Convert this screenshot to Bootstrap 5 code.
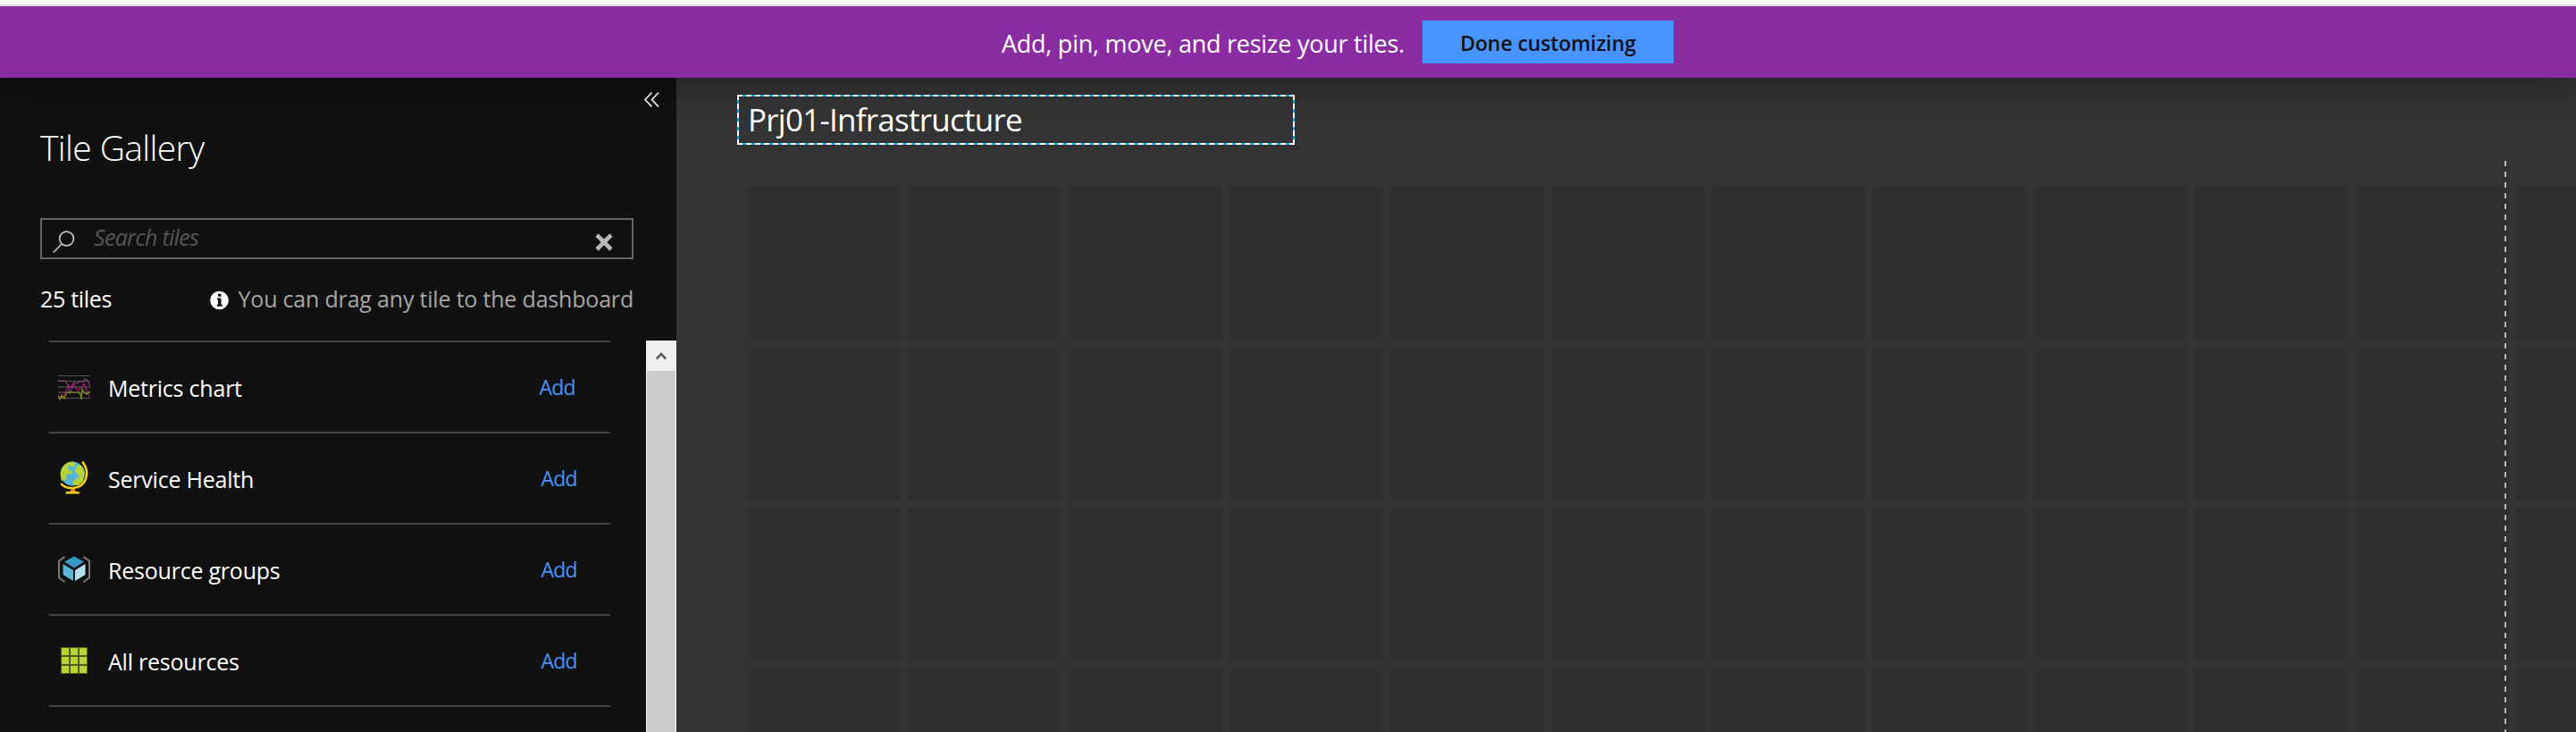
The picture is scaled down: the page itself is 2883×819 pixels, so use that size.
<!DOCTYPE html>
<html lang="en">
<head>
<meta charset="utf-8">
<meta name="viewport" content="width=device-width, initial-scale=1">
<title>Prj01-Infrastructure</title>
<link href="https://cdn.jsdelivr.net/npm/bootstrap@5.3.0/dist/css/bootstrap.min.css" rel="stylesheet">
<style>
  body { height: 100vh; background: #333; color: #fff; font: 400 25px/30px "Open Sans", "Noto Sans", sans-serif; }
  .top-strip { height: 7px; background: #f9f9f9; border-bottom: 2px solid #dedede; z-index: 3; }
  .customize-bar { height: 80px; padding-left: 1121px; background: #8a2da2; box-shadow: 0 0 44px rgba(0,0,0,.43); z-index: 2; }
  .customize-text { width: 471px; font-size: 27px; letter-spacing: -.25px; padding-top: 3px; white-space: nowrap; }
  .btn-done { width: 281px; height: 48px; background: #4894fe; color: #111; font-size: 23px; font-weight: 600; line-height: 30px; letter-spacing: -.1px; padding: 2px 0 0; }
  .btn-done:hover { background: #5ba0ff; color: #111; }
  .gallery { width: 757px; background: #111; }
  .collapse-row { height: 58px; padding: 16px 19px 0 0; }
  .gallery-title { font-size: 39px; font-weight: 300; line-height: 40px; letter-spacing: -.6px; }
  .gallery-head { padding: 0 48px 0 45px; }
  .search-box { height: 46px; margin-top: 59px; border: 2px solid #666; padding: 0 21px 0 12px; }
  .search-box input { background: none; color: #fff; font-size: inherit; font-style: italic; letter-spacing: -.7px; line-height: 30px; padding: 0 0 4px; margin-left: 20px; }
  .search-box input:focus { background: none; color: #fff; }
  .search-box input::placeholder { color: #565656; opacity: 1; }
  .gallery-info { margin-top: 29px; height: 30px; }
  .tile-count { letter-spacing: -.3px; }
  .drag-hint { color: #a6a6a6; letter-spacing: -.19px; }
  .info-icon { margin: 3px 8px 0 0; }
  .tile-scroll { margin-top: 32px; }
  .tile-list { width: 628px; margin-left: 55px; border-top: 2px solid #444; }
  .tile-row { height: 102px; border-bottom: 2px solid #444; padding: 0 37px 0 10px; }
  .tile-row:first-child { padding-right: 39px; }
  .tile-icon { width: 36px; height: 60px; margin-right: 20px; flex: none; }
  .tile-name { letter-spacing: -.22px; padding-top: 2px; }
  .add-link { color: #4894fe; font-size: 23px; letter-spacing: -.7px; text-decoration: none; }
  .scroll-rail { width: 34px; background: #cdcdcd; border: solid #f0f0f0; border-width: 0 1px; }
  .scroll-up { height: 34px; margin: 0 -1px; background: #f0f0f0; }
  .board { padding: 19px 0 0 68px; }
  .board-title { position: relative; width: 624px; height: 56px; border: 2px solid #00b4f1; padding: 9px 0 0 10px; font-size: 35px; line-height: 34px; letter-spacing: -.75px; font-weight: 400; }
  .board-title::after { content: ""; position: absolute; inset: -2px; border: 2px dashed #fff; }
  .board-grid { display: grid; grid-template-columns: repeat(12, 170px); grid-auto-rows: 170px; gap: 10px; margin: 47px 0 0 12px; }
  .board-cell { background: #2f2f2f; }
  .fold-line { position: absolute; left: 2046px; top: 93px; bottom: 0; width: 2px; background: repeating-linear-gradient(#b9b9b9 0 6px, transparent 6px 12px); }
</style>
</head>
<body class="d-flex flex-column overflow-hidden m-0">
<div class="top-strip flex-shrink-0 position-relative"></div>
<header class="customize-bar d-flex align-items-center flex-shrink-0 position-relative">
  <span class="customize-text">Add, pin, move, and resize your tiles.</span>
  <button class="btn btn-done border-0 rounded-0" type="button">Done customizing</button>
</header>
<div class="d-flex flex-grow-1 overflow-hidden">
  <aside class="gallery d-flex flex-column flex-shrink-0">
    <div class="collapse-row d-flex justify-content-end">
      <svg width="18" height="17" viewBox="0 0 18 17" fill="none" stroke="#eee" stroke-width="1.8"><path d="M9.500 .7 2 8.500l7.500 7.800M17 .7 9.500 8.500l7.500 7.800"/></svg>
    </div>
    <div class="gallery-head">
      <h2 class="gallery-title m-0">Tile Gallery</h2>
      <div class="search-box d-flex align-items-center">
        <svg class="mt-2 flex-shrink-0" width="26" height="26" viewBox="0 0 26 26" fill="none" stroke="#c4c4c4" stroke-width="1.7"><circle cx="15.500" cy="9" r="7.900"/><path d="M10 15 .7 24.500"/></svg>
        <input class="form-control border-0 shadow-none" type="text" placeholder="Search tiles" aria-label="Search tiles">
        <svg class="mt-2 flex-shrink-0" width="20" height="20" viewBox="0 0 20 20" stroke="#b9b9b9" stroke-width="4.600"><path d="M2 2 18 18M18 2 2 18"/></svg>
      </div>
      <div class="gallery-info d-flex justify-content-between align-items-center">
        <span class="tile-count">25 tiles</span>
        <span class="drag-hint d-flex align-items-center text-nowrap">
          <svg class="info-icon" width="24" height="22" viewBox="0 0 24 22"><circle cx="10.500" cy="11" r="10.300" fill="#fff"/><path d="M9 3.800h3.500v3H9zM8 8.500h4.500v7.200h1.300v2H7.800v-2H9v-5.200H8z" fill="#111"/></svg>
          You can drag any tile to the dashboard
        </span>
      </div>
    </div>
    <div class="tile-scroll d-flex flex-grow-1 justify-content-between overflow-hidden">
      <div class="tile-list">
        <div class="tile-row d-flex align-items-center">
          <svg class="tile-icon" viewBox="0 0 36 60" fill="none"><path d="M0 17.500h36M0 23.500h36M0 42.500h36" stroke="#555" stroke-width="1"/><path d="M0 30h36M0 36h36" stroke="#3b3b3b" stroke-width="2"/><path d="M0 22l2 1h6l3 5 2 9 2-4 3-8 3 1 4-2h3l2-3 3 2 3 6" stroke="#80477f" stroke-width="1.100"/><path d="M0 40l3 1 3 1 2-6 4-8 2 2 3-4 3 5 3 3 3-4 3-4 2 5 2 6 3 4" stroke="#b4127c" stroke-width="1.200"/><path d="M0 40l2 4 2-5 3 4 3-7h13l2 2 1 6 1-12 2 4 3 2 4-3" stroke="#7fa30b" stroke-width="1.100"/></svg>
          <span class="tile-name">Metrics chart</span><a class="add-link ms-auto" href="#">Add</a>
        </div>
        <div class="tile-row d-flex align-items-center">
          <svg class="tile-icon" viewBox="-.7 0 36 60"><circle cx="15.500" cy="25" r="13.600" fill="#59b4d9"/><path d="M2 25C3 17 8 11.500 16 11.400c2 1 3 3 2 5l-3 1-2-2-3 2 1 3 4 2-1 4-4-2-2 3 1 3-2 2-3-1-1 3zM19 17l4-2 4 3 2 6-2 10-5 4h-5l-1-4 3-3 3-1 1-3-4-3-1-4 3-1z" fill="#b8d432"/><path d="M26.500 11.500c9 12 5 28-10 29.500C10 41.500 5 39 2.500 36" fill="none" stroke="#fcd116" stroke-width="2.600"/><path d="M14 42h4l1 3h-6z" fill="#ff8c00"/><path d="M8 45h15v2.500H8z" fill="#fcd116"/></svg>
          <span class="tile-name">Service Health</span><a class="add-link ms-auto" href="#">Add</a>
        </div>
        <div class="tile-row d-flex align-items-center">
          <svg class="tile-icon" viewBox="0 -2 36 60"><path d="M18 13.500 29 19.500 18 26.500 7 19.500z" fill="#3999c6"/><path d="M5.500 22 17 29v12L5.500 34z" fill="#59b4d9"/><path d="M30.500 22 19 29v12l11.500-7z" fill="#b3def0"/><path d="M7.500 14.200 1 18.500v19l6.500 4.500M28.500 14.200 35 18.500v19L28.500 42" fill="none" stroke="#7a7a7a" stroke-width="2"/></svg>
          <span class="tile-name">Resource groups</span><a class="add-link ms-auto" href="#">Add</a>
        </div>
        <div class="tile-row d-flex align-items-center">
          <svg class="tile-icon" viewBox="0 -2 36 60"><path d="M3 13h30v30H3z" fill="#4c5a1b"/><path d="M4 14h8v8H4zM14 14h8v8h-8zM24 14h8v8h-8zM4 24h8v8H4zM14 24h8v8h-8zM24 24h8v8h-8zM4 34h8v8H4zM14 34h8v8h-8zM24 34h8v8h-8z" fill="#b8d432"/></svg>
          <span class="tile-name">All resources</span><a class="add-link ms-auto" href="#">Add</a>
        </div>
      </div>
      <div class="scroll-rail">
        <div class="scroll-up d-flex align-items-center justify-content-center"><svg width="12" height="10" viewBox="0 0 12 10" fill="none" stroke="#606060" stroke-width="2.600"><path d="M.8 8.500 6 3l5.200 5.500"/></svg></div>
      </div>
    </div>
  </aside>
  <main class="board position-relative flex-grow-1 overflow-hidden">
    <h1 class="board-title m-0">Prj01-Infrastructure</h1>
    <div class="board-grid" id="grid"></div>
    <div class="fold-line"></div>
  </main>
</div>
<script src="https://cdn.jsdelivr.net/npm/bootstrap@5.3.0/dist/js/bootstrap.bundle.min.js"></script>
<script>
  document.getElementById('grid').innerHTML = '<div class="board-cell"></div>'.repeat(48);
</script>
</body>
</html>
